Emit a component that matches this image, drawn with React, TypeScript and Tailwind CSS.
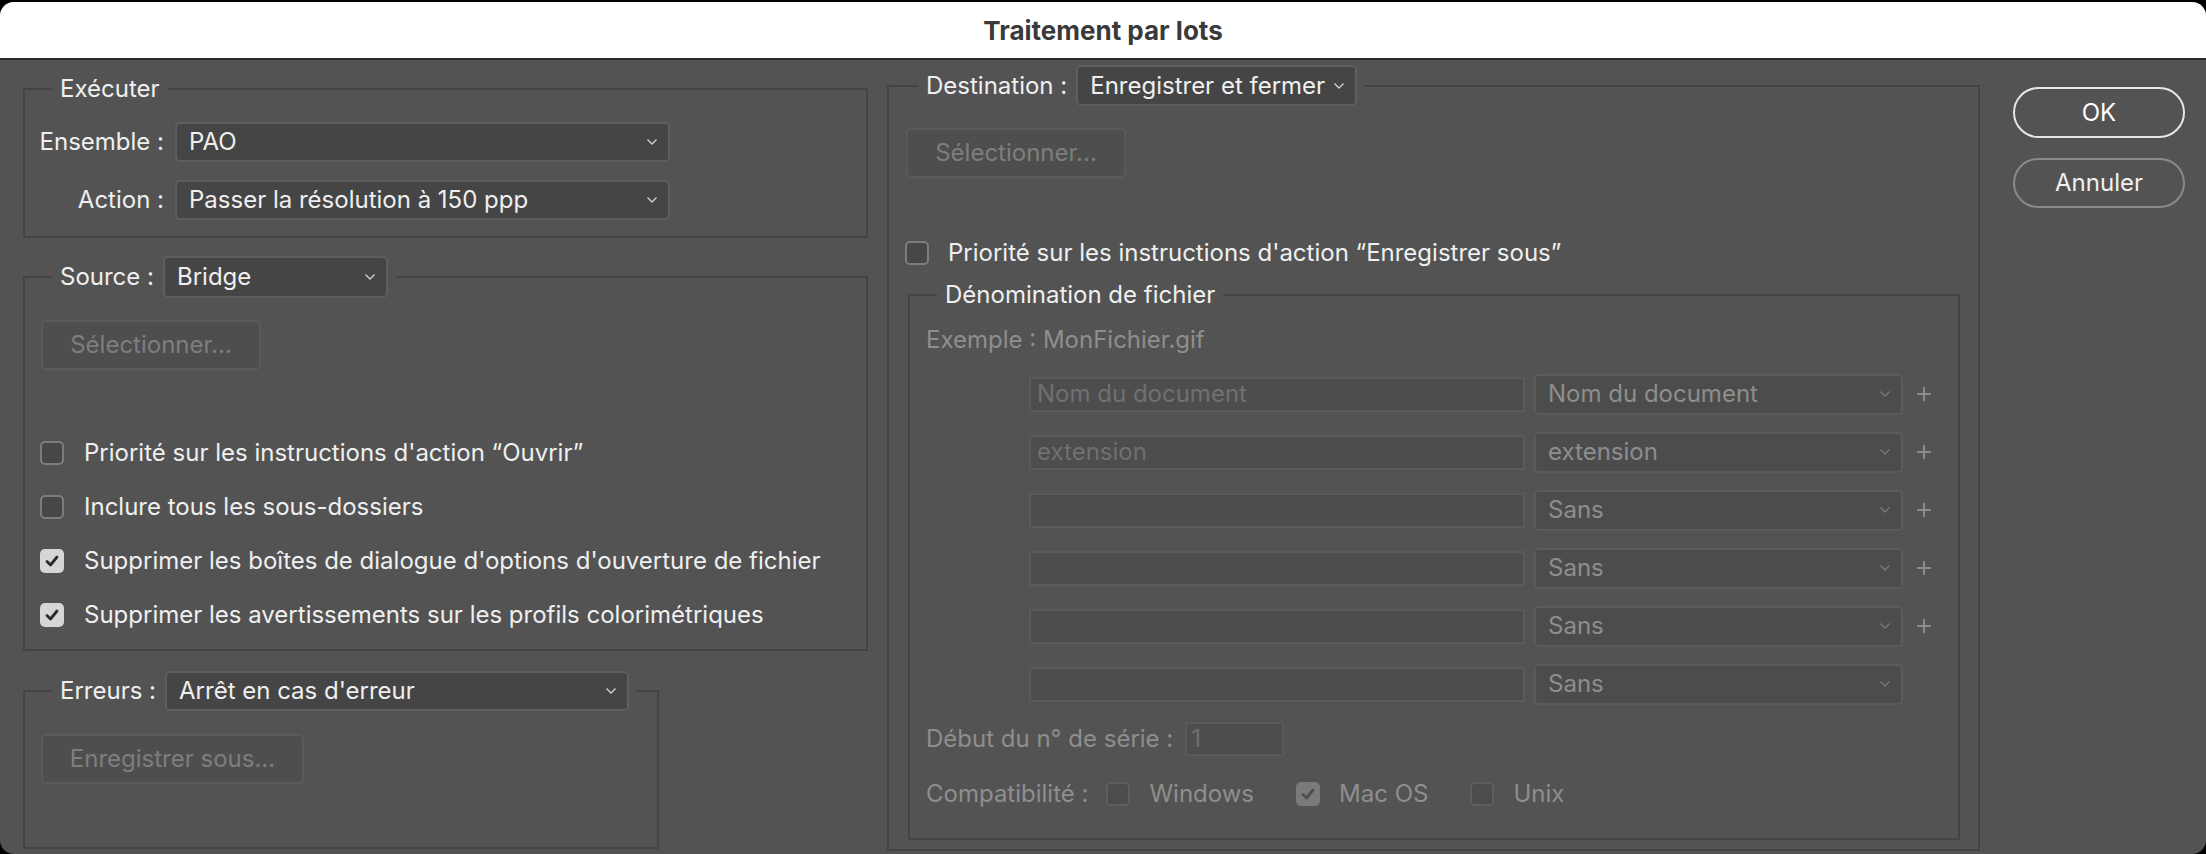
import React from 'react';

const font = { fontFamily: 'Inter, "Liberation Sans", sans-serif' };

type Dim = { dim?: boolean };

const Chevron: React.FC<Dim> = ({ dim }) => (
  <svg width="12" height="8" viewBox="0 0 12 8" className="shrink-0">
    <path d="M1.5 1.5 L6 6 L10.5 1.5" fill="none" stroke={dim ? '#7a7a7a' : '#cfcfcf'} strokeWidth="1.4" />
  </svg>
);

const Select: React.FC<{ value: string; w: string; h?: string } & Dim> = ({ value, w, h = 'h-[40px]', dim }) => (
  <div
    className={`${w} ${h} flex items-center justify-between rounded-[5px] border-2 pl-[12px] pr-[10px] ${
      dim ? 'bg-[#4c4c4c] border-[#5b5b5b] text-[#8e8e8e]' : 'bg-[#454545] border-[#5e5e5e] text-[#efefef]'
    }`}
  >
    <span className="whitespace-nowrap">{value}</span>
    <Chevron dim={dim} />
  </div>
);

const DisabledButton: React.FC<{ label: string; w: string }> = ({ label, w }) => (
  <div className={`${w} h-[50px] flex items-center justify-center rounded-[5px] border-2 border-[#5a5a5a] bg-[#4e4e4e] text-[#7e7e7e]`}>
    {label}
  </div>
);

const Checkbox: React.FC<{ checked?: boolean } & Dim> = ({ checked, dim }) => {
  if (checked) {
    return (
      <div className={`w-[24px] h-[24px] shrink-0 rounded-[5px] flex items-center justify-center ${dim ? 'bg-[#7a7a7a]' : 'bg-[#d6d6d6]'}`}>
        <svg width="14" height="12" viewBox="0 0 14 12">
          <path d="M2 6.5 L5.5 10 L12 2" fill="none" stroke={dim ? '#4e4e4e' : '#2c2c2c'} strokeWidth="2.8" strokeLinecap="round" strokeLinejoin="round" />
        </svg>
      </div>
    );
  }
  return (
    <div
      className={`w-[24px] h-[24px] shrink-0 rounded-[5px] border-2 ${dim ? 'border-[#5e5e5e] bg-[#4c4c4c]' : 'border-[#7c7c7c] bg-[#474747]'}`}
    />
  );
};

const Plus = () => (
  <svg width="16" height="16" viewBox="0 0 16 16" className="ml-[13px] shrink-0">
    <path d="M8 1 V15 M1 8 H15" stroke="#8c8c8c" strokeWidth="2" />
  </svg>
);

const CheckRow: React.FC<{ label: string; checked?: boolean }> = ({ label, checked }) => (
  <div className="h-[54px] flex items-center gap-[20px] pl-[15px]">
    <Checkbox checked={checked} />
    <span className="whitespace-nowrap">{label}</span>
  </div>
);

const NameRow: React.FC<{ text?: string; select: string; plus?: boolean }> = ({ text, select, plus = true }) => (
  <div className="h-[58px] flex items-center pl-[119px]">
    <div className="w-[496px] h-[35px] flex items-center px-[6px] border-2 border-[#5a5a5a] bg-[#4d4d4d] text-[#707070] whitespace-nowrap">
      {text}
    </div>
    <div className="ml-[9px]">
      <Select value={select} w="w-[369px]" h="h-[41px]" dim />
    </div>
    {plus && <Plus />}
  </div>
);

export default function App() {
  return (
    <div className="w-[2206px] h-[854px] bg-black pt-[2px] overflow-hidden text-[24px]" style={font}>
      <div className="h-[852px] rounded-[14px] overflow-hidden flex flex-col bg-[#535353]">
        {/* barre de titre */}
        <div className="h-[56px] shrink-0 bg-white flex items-center justify-center border-b-2 border-[#2a2a2a] box-content">
          <span className="font-bold text-[26px] text-[#3a3a3a]">Traitement par lots</span>
        </div>

        <div className="flex-1 flex items-start text-[#efefef]">
          {/* colonne gauche */}
          <div className="ml-[23px] w-[845px] flex flex-col">
            {/* Exécuter */}
            <fieldset className="mt-[14px] border-2 border-[#444444] pb-[16px]">
              <legend className="ml-[27px] px-[8px] leading-[30px]">Exécuter</legend>
              <div className="pt-[18px] flex flex-col gap-[18px]">
                <div className="flex items-center">
                  <span className="w-[139px] text-right">Ensemble :</span>
                  <div className="ml-[11px]"><Select value="PAO" w="w-[495px]" /></div>
                </div>
                <div className="flex items-center">
                  <span className="w-[139px] text-right">Action :</span>
                  <div className="ml-[11px]"><Select value="Passer la résolution à 150 ppp" w="w-[495px]" /></div>
                </div>
              </div>
            </fieldset>

            {/* Source */}
            <fieldset className="mt-[18px] border-2 border-[#444444] pb-[7px]">
              <legend className="ml-[27px] px-[8px] flex items-center gap-[9px]">
                <span>Source :</span>
                <Select value="Bridge" w="w-[225px]" h="h-[42px]" />
              </legend>
              <div className="pl-[16px] mt-[22px]">
                <DisabledButton label="Sélectionner..." w="w-[220px]" />
              </div>
              <div className="mt-[56px] flex flex-col">
                <CheckRow label="Priorité sur les instructions d'action “Ouvrir”" />
                <CheckRow label="Inclure tous les sous-dossiers" />
                <CheckRow label="Supprimer les boîtes de dialogue d'options d'ouverture de fichier" checked />
                <CheckRow label="Supprimer les avertissements sur les profils colorimétriques" checked />
              </div>
            </fieldset>

            {/* Erreurs */}
            <fieldset className="mt-[20px] w-[636px] h-[178px] border-2 border-[#444444]">
              <legend className="ml-[27px] px-[8px] flex items-center gap-[9px]">
                <span>Erreurs :</span>
                <Select value="Arrêt en cas d'erreur" w="w-[464px]" />
              </legend>
              <div className="pl-[16px] mt-[23px]">
                <DisabledButton label="Enregistrer sous..." w="w-[263px]" />
              </div>
            </fieldset>
          </div>

          {/* colonne droite */}
          <fieldset className="ml-[19px] mt-[5px] w-[1093px] h-[786px] border-2 border-[#444444]">
            <legend className="ml-[29px] px-[8px] flex items-center gap-[9px]">
              <span>Destination :</span>
              <Select value="Enregistrer et fermer" w="w-[281px]" h="h-[41px]" />
            </legend>
            <div className="pl-[17px] mt-[22px]">
              <DisabledButton label="Sélectionner..." w="w-[220px]" />
            </div>
            <div className="mt-[57px] flex items-center gap-[19px] pl-[16px]">
              <Checkbox />
              <span className="whitespace-nowrap">Priorité sur les instructions d'action “Enregistrer sous”</span>
            </div>

            <fieldset className="ml-[19px] mt-[9px] w-[1052px] h-[560px] border-2 border-[#444444]">
              <legend className="ml-[27px] px-[8px] leading-[30px]">Dénomination de fichier</legend>
              <div className="text-[#8e8e8e]">
                <div className="pl-[16px] mt-[15px] leading-[30px]">Exemple : MonFichier.gif</div>
                <div className="mt-[10px] flex flex-col">
                  <NameRow text="Nom du document" select="Nom du document" />
                  <NameRow text="extension" select="extension" />
                  <NameRow select="Sans" />
                  <NameRow select="Sans" />
                  <NameRow select="Sans" />
                  <NameRow select="Sans" plus={false} />
                </div>
                <div className="mt-[-1px] h-[54px] flex items-center pl-[16px]">
                  <span>Début du n° de série :</span>
                  <div className="ml-[12px] w-[99px] h-[34px] flex items-center px-[4px] border-2 border-[#5a5a5a] bg-[#4d4d4d] text-[#707070]">1</div>
                </div>
                <div className="mt-[2px] h-[52px] flex items-center pl-[16px]">
                  <span>Compatibilité :</span>
                  <div className="ml-[18px]"><Checkbox dim /></div>
                  <span className="ml-[19px]">Windows</span>
                  <div className="ml-[42px]"><Checkbox checked dim /></div>
                  <span className="ml-[19px]">Mac OS</span>
                  <div className="ml-[42px]"><Checkbox dim /></div>
                  <span className="ml-[19px]">Unix</span>
                </div>
              </div>
            </fieldset>
          </fieldset>

          {/* boutons */}
          <div className="ml-[33px] mt-[27px] flex flex-col gap-[20px]">
            <div className="w-[172px] h-[51px] rounded-full border-2 border-[#e6e6e6] flex items-center justify-center text-white">
              OK
            </div>
            <div className="w-[172px] h-[50px] rounded-full border-2 border-[#8a8a8a] flex items-center justify-center text-[#f0f0f0]">
              Annuler
            </div>
          </div>
        </div>
      </div>
    </div>
  );
}
